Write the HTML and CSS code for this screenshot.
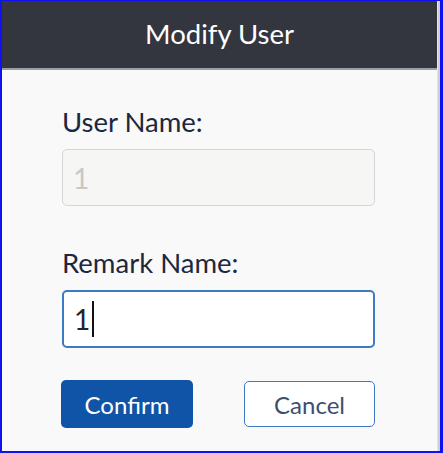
FILE: index.html
```html
<!DOCTYPE html>
<html lang="en">
<head>
<meta charset="utf-8">
<title>Modify User</title>
<link rel="stylesheet" href="styles.css">
</head>
<body>
<div class="frame">
  <div class="dialog">
    <div class="header">Modify User</div>
    <div class="content">
      <div class="label">User Name:</div>
      <div class="field field-disabled"><span class="value">1</span></div>
      <div class="label label-second">Remark Name:</div>
      <div class="field field-active"><span class="value">1</span><span class="caret"></span></div>
      <div class="actions">
        <button class="btn btn-primary">Confirm</button>
        <button class="btn btn-outline">Cancel</button>
      </div>
    </div>
  </div>
  <div class="scrollbar"></div>
</div>
</body>
</html>
```
FILE: styles.css
```css
html, body {
  margin: 0;
  padding: 0;
}
body {
  font-family: Lato, "Open Sans", sans-serif;
}
.frame {
  width: 443px;
  height: 453px;
  box-sizing: border-box;
  border-style: solid;
  border-color: #1010f0;
  border-width: 1px 3px 2px 2px;
  display: flex;
  background: #f9f9f9;
}
.dialog {
  flex: 1;
  display: flex;
  flex-direction: column;
}
.scrollbar {
  width: 3px;
  background: #cfcfcf;
  border-left: 1px solid #e6e6e6;
  box-sizing: border-box;
}
.header {
  height: 67px;
  background: #33363f;
  border-bottom: 2px solid #9c9ea3;
  color: #ffffff;
  font-size: 27.5px;
  line-height: 66px;
  text-align: center;
}
.content {
  padding: 35px 0 0 60px;
  display: flex;
  flex-direction: column;
}
.label {
  font-size: 27.5px;
  line-height: 34px;
  color: #1c2740;
  margin-bottom: 10px;
}
.label-second {
  margin-top: 40px;
}
.field {
  width: 313px;
  height: 57px;
  box-sizing: border-box;
  border-radius: 5px;
  display: flex;
  align-items: center;
  padding-left: 10px;
  font-size: 28px;
}
.field-disabled {
  background: #f6f6f4;
  border: 1.5px solid #d6d6d6;
  color: #c8c8c8;
}
.field-active {
  background: #ffffff;
  border: 2px solid #3d79c4;
  color: #1e2433;
  height: 58px;
}
.caret {
  width: 2px;
  height: 36px;
  background: #111111;
  margin-left: 2px;
}
.actions {
  display: flex;
  justify-content: space-between;
  width: 314px;
  margin-top: 32px;
  margin-left: -1px;
}
.btn {
  width: 132px;
  height: 48px;
  box-sizing: border-box;
  border-radius: 5px;
  font-family: Lato, "Open Sans", sans-serif;
  font-size: 24px;
  padding: 0;
  cursor: pointer;
}
.btn-primary {
  background: #0f54a6;
  border: none;
  color: #ffffff;
}
.btn-outline {
  background: #ffffff;
  border: 1.5px solid #3d79c4;
  color: #3b4f72;
  height: 46px;
  margin-top: 1px;
  margin-left: 1px;
  width: 131px;
}
```
